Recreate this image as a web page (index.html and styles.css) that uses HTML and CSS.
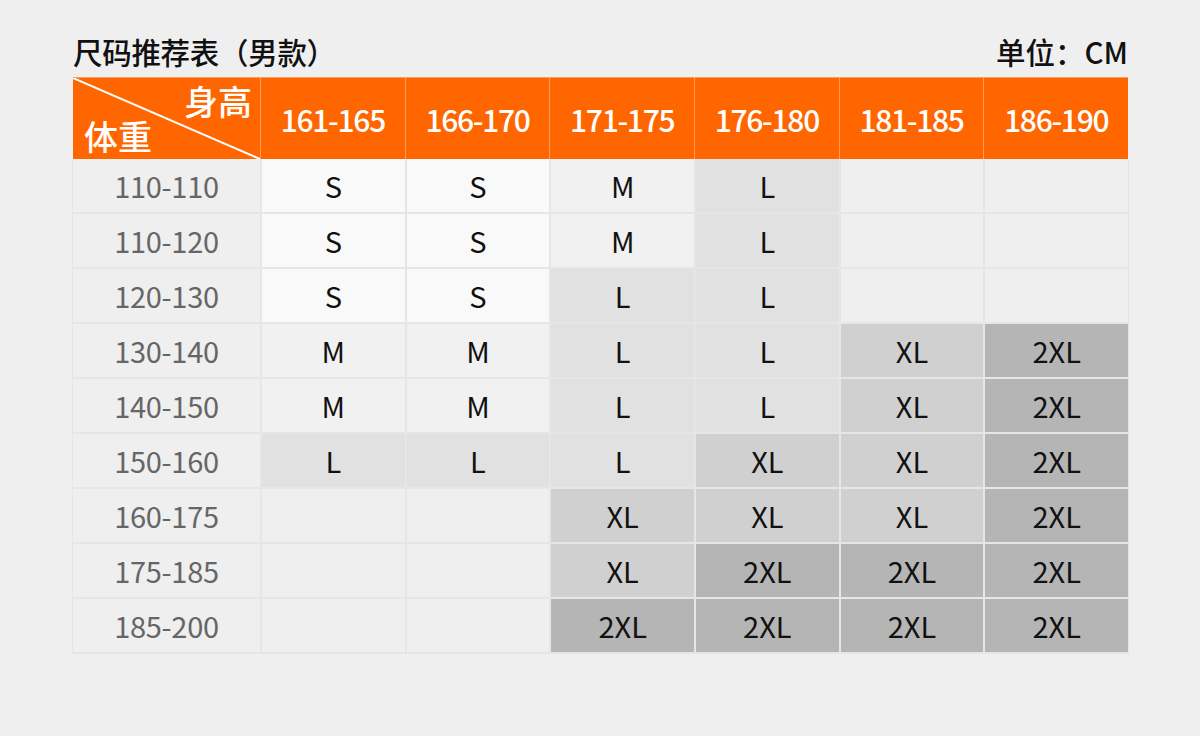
FILE: index.html
```html
<!DOCTYPE html>
<html lang="zh-CN">
<head>
<meta charset="utf-8">
<title>尺码推荐表（男款）</title>
<link rel="stylesheet" href="styles.css">
</head>
<body>
<div class="page">
  <div class="titlebar">
    <span class="title">尺码推荐表（男款）</span>
    <span class="unit">单位：CM</span>
  </div>
  <div class="table">
    <div class="thead">
      <div class="corner"><span class="h-top">身高</span><span class="h-bot">体重</span></div>
      <div class="th">161-165</div>
      <div class="th">166-170</div>
      <div class="th">171-175</div>
      <div class="th">176-180</div>
      <div class="th">181-185</div>
      <div class="th">186-190</div>
    </div>
    <div class="tbody">
      <div class="rh">110-110</div><div class="c s">S</div><div class="c s">S</div><div class="c m">M</div><div class="c l">L</div><div class="c e"></div><div class="c e"></div>
      <div class="rh">110-120</div><div class="c s">S</div><div class="c s">S</div><div class="c m">M</div><div class="c l">L</div><div class="c e"></div><div class="c e"></div>
      <div class="rh">120-130</div><div class="c s">S</div><div class="c s">S</div><div class="c l">L</div><div class="c l">L</div><div class="c e"></div><div class="c e"></div>
      <div class="rh">130-140</div><div class="c m">M</div><div class="c m">M</div><div class="c l">L</div><div class="c l">L</div><div class="c xl">XL</div><div class="c xxl">2XL</div>
      <div class="rh">140-150</div><div class="c m">M</div><div class="c m">M</div><div class="c l">L</div><div class="c l">L</div><div class="c xl">XL</div><div class="c xxl">2XL</div>
      <div class="rh">150-160</div><div class="c l">L</div><div class="c l">L</div><div class="c l">L</div><div class="c xl">XL</div><div class="c xl">XL</div><div class="c xxl">2XL</div>
      <div class="rh">160-175</div><div class="c e"></div><div class="c e"></div><div class="c xl">XL</div><div class="c xl">XL</div><div class="c xl">XL</div><div class="c xxl">2XL</div>
      <div class="rh">175-185</div><div class="c e"></div><div class="c e"></div><div class="c xl">XL</div><div class="c xxl">2XL</div><div class="c xxl">2XL</div><div class="c xxl">2XL</div>
      <div class="rh">185-200</div><div class="c e"></div><div class="c e"></div><div class="c xxl">2XL</div><div class="c xxl">2XL</div><div class="c xxl">2XL</div><div class="c xxl">2XL</div>
    </div>
  </div>
</div>
</body>
</html>
```

FILE: styles.css
```css
* { box-sizing: border-box; }
html, body {
  margin: 0;
  padding: 0;
  background: #efefef;
}
body {
  font-family: "Noto Sans CJK SC", "Noto Sans", sans-serif;
  color: #111;
}
.page {
  width: 1200px;
  height: 736px;
  padding: 32px 72px 0 73px;
}
.titlebar {
  display: flex;
  justify-content: space-between;
  align-items: center;
  height: 38px;
  margin-bottom: 7px;
  font-size: 29.5px;
  line-height: 38px;
  font-weight: 500;
}
.title { letter-spacing: -0.3px; }
.table {
  width: 1055px;
  display: flex;
  flex-direction: column;
}
.thead {
  display: grid;
  grid-template-columns: 187px repeat(6, 1fr);
  column-gap: 1px;
  height: 82px;
  background: #f8a063;
  padding-top: 1px;
}
.th, .corner {
  background: #ff6600;
}
.th {
  display: flex;
  align-items: center;
  justify-content: center;
  color: #fff;
  font-size: 30px;
  font-weight: 500;
  letter-spacing: -1.3px;
}
.corner {
  background: linear-gradient(to top right, #ff6600 calc(50% - 1.5px), #ffffff calc(50% - 0.5px), #ffffff calc(50% + 0.5px), #ff6600 calc(50% + 1.5px));
  color: #fff;
  font-size: 34px;
  font-weight: 500;
  line-height: 1;
  display: flex;
  flex-direction: column;
  justify-content: space-between;
  padding: 6px 8px 6px 11px;
}
.h-top { align-self: flex-end; }
.h-bot { align-self: flex-start; }
.tbody {
  display: grid;
  grid-template-columns: 187px repeat(6, 1fr);
  grid-auto-rows: 1fr;
  gap: 2px;
  height: 495px;
  background: #e6e6e9;
  padding: 0 1px 2px 1px;
  margin-left: -1px;
  width: 1057px;
}
.rh, .c {
  display: flex;
  align-items: center;
  justify-content: center;
  font-size: 29px;
  line-height: 1;
}
.rh {
  background: #efefef;
  color: #666;
  letter-spacing: -0.3px;
}
.c { color: #111; }
.c.s { background: #f9f9f9; }
.c.m { background: #f1f1f1; }
.c.l { background: #e1e1e1; }
.c.xl { background: #d0d0d0; }
.c.xxl { background: #b5b5b5; }
.c.e { background: #efefef; }
```
